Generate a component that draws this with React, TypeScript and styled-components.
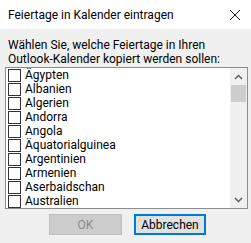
import React from "react";
import styled, { createGlobalStyle } from "styled-components";

const Global = createGlobalStyle`
  html, body { margin: 0; padding: 0; background: #f0f0f0; }
  body { font-family: Roboto, "Noto Sans", "DejaVu Sans", sans-serif; font-size: 12px; color: #000; }
  * { box-sizing: border-box; }
`;

const Window = styled.div`
  width: 251px;
  height: 243px;
  background: #f0f0f0;
  display: flex;
  flex-direction: column;
  overflow: hidden;
`;

const TitleBar = styled.div`
  height: 29px;
  background: #ffffff;
  display: flex;
  align-items: center;
  justify-content: space-between;
  padding: 0 9px 0 8px;
`;

const Title = styled.div`
  font-size: 12px;
  line-height: 14px;
  margin-top: 1px;
  color: #000;
`;

const Close = styled.div`
  width: 14px;
  height: 14px;
  display: flex;
  align-items: center;
  justify-content: center;
  margin-top: 1px;
`;

const Body = styled.div`
  display: flex;
  flex-direction: column;
  padding: 9px 3px 0 5px;
`;

const Label = styled.div`
  padding-left: 3px;
  margin-bottom: 1px;
`;

const LabelLine = styled.div`
  font-size: 12px;
  line-height: 14px;
  height: 14px;
  white-space: nowrap;
`;

const ListBox = styled.div`
  height: 142px;
  border: 1px solid #8c8c8c;
  background: #ffffff;
  display: flex;
`;

const Items = styled.div`
  flex: 1;
  display: flex;
  flex-direction: column;
`;

const Row = styled.div`
  height: 14px;
  display: flex;
  align-items: flex-start;
  padding-left: 2px;
`;

const Box = styled.span`
  width: 13px;
  height: 13px;
  margin-top: 1px;
  border: 1px solid #333333;
  background: #ffffff;
  flex: none;
`;

const ItemText = styled.span`
  display: block;
  height: 14px;
  margin-left: 4px;
  font-size: 12px;
  line-height: 14px;
  white-space: nowrap;
`;

const ScrollBar = styled.div`
  width: 17px;
  background: #f0f0f0;
  display: flex;
  flex-direction: column;
`;

const ArrowButton = styled.div`
  height: 17px;
  display: flex;
  align-items: center;
  justify-content: center;
`;

const Thumb = styled.div`
  height: 17px;
  margin: 0 1px;
  background: #cdcdcd;
`;

const Track = styled.div`
  flex: 1;
`;

const Buttons = styled.div`
  display: flex;
  justify-content: center;
  gap: 12px;
  margin-top: 5px;
  padding-left: 2px;
`;

const Button = styled.div<{ $disabled?: boolean; $focused?: boolean }>`
  flex: none;
  width: ${(p) => (p.$focused ? "72px" : "73px")};
  height: 21px;
  display: flex;
  align-items: center;
  justify-content: center;
  font-size: 12px;
  line-height: 14px;
  background: ${(p) => (p.$disabled ? "#cccccc" : "#e1e1e1")};
  border: ${(p) => (p.$focused ? "2px solid #0078d7" : "1px solid #bfbfbf")};
  color: ${(p) => (p.$disabled ? "#8a8a8a" : "#000000")};
`;

const countries = [
  "Ägypten",
  "Albanien",
  "Algerien",
  "Andorra",
  "Angola",
  "Äquatorialguinea",
  "Argentinien",
  "Armenien",
  "Aserbaidschan",
  "Australien",
];

const Chevron = ({ up }: { up?: boolean }) => (
  <svg width="9" height="6" viewBox="0 0 9 6">
    <path
      d={up ? "M1 5 L4.5 1.5 L8 5" : "M1 1 L4.5 4.5 L8 1"}
      fill="none"
      stroke="#606060"
      strokeWidth="1.5"
    />
  </svg>
);

export default function App() {
  return (
    <>
      <Global />
      <Window>
        <TitleBar>
          <Title>Feiertage in Kalender eintragen</Title>
          <Close>
            <svg width="12" height="12" viewBox="0 0 12 12">
              <path d="M1 1 L11 11 M11 1 L1 11" stroke="#1a1a1a" strokeWidth="1" fill="none" />
            </svg>
          </Close>
        </TitleBar>
        <Body>
          <Label>
            <LabelLine>Wählen Sie, welche Feiertage in Ihren</LabelLine>
            <LabelLine>Outlook-Kalender kopiert werden sollen:</LabelLine>
          </Label>
          <ListBox>
            <Items>
              {countries.map((c) => (
                <Row key={c}>
                  <Box />
                  <ItemText>{c}</ItemText>
                </Row>
              ))}
            </Items>
            <ScrollBar>
              <ArrowButton>
                <Chevron up />
              </ArrowButton>
              <Thumb />
              <Track />
              <ArrowButton>
                <Chevron />
              </ArrowButton>
            </ScrollBar>
          </ListBox>
          <Buttons>
            <Button $disabled>OK</Button>
            <Button $focused>Abbrechen</Button>
          </Buttons>
        </Body>
      </Window>
    </>
  );
}
